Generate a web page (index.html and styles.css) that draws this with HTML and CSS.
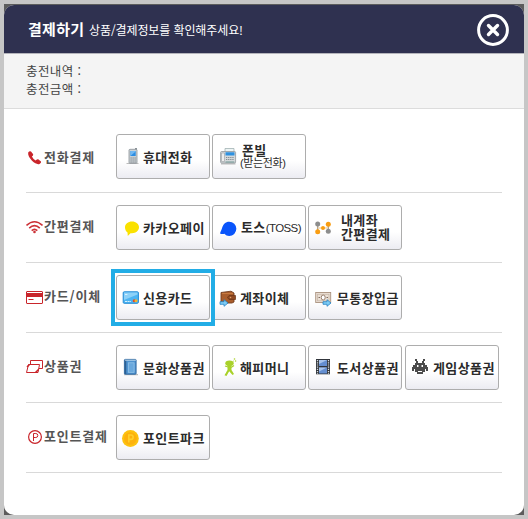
FILE: index.html
```
<!DOCTYPE html>
<html lang="ko">
<head>
    <meta charset="UTF-8">
    <meta name="viewport" content="width=device-width, initial-scale=1.0">
    <title>결제하기</title>
    <link rel="stylesheet" href="styles.css">
</head>
<body>
    <div class="popup">
        <div class="header">
            <h1>결제하기</h1>
            <span class="guide">상품/결제정보를 확인해주세요!</span>
            <button class="close" aria-label="닫기">
                <svg width="32" height="32" viewBox="0 0 32 32" fill="none" stroke="#fff">
                    <circle cx="16" cy="16" r="14.4" stroke-width="3"/>
                    <path d="M11.5 11.5l9 9M20.5 11.5l-9 9" stroke-width="3.4" stroke-linecap="round"/>
                </svg>
            </button>
        </div>

        <div class="info">
            <p>충전내역 :</p>
            <p>충전금액 :</p>
        </div>

        <div class="methods">
            <!-- 전화결제 -->
            <div class="row first">
                <div class="label">
                    <svg width="17" height="45" viewBox="0 0 17 45">
                        <path d="M2.2 18.5Q3.5 16.5 5 17.5L7.2 20.2Q7.5 21.5 5.9 22.6Q7 25 9.6 26.5Q11.2 24.9 12.2 25.2L15 27.5Q15.6 29 13.5 29.9Q10.5 31 6 26.8Q1.5 22 2.2 18.5Z" fill="#c9252b"/>
                    </svg>
                    <span class="wide">전화결제</span>
                </div>
                <button class="pay">
                    <svg width="26" height="43" viewBox="0 0 26 43">
                        <path d="M9.5 28.5h12" stroke="#bbb" stroke-width="1.2"/>
                        <path d="M18 13h2v3h-2z" fill="#8c9499"/>
                        <rect x="12" y="14.3" width="8" height="14" rx="1" fill="#cbd1d4" stroke="#8a9297" stroke-width=".8"/>
                        <rect x="13.4" y="16" width="5.3" height="5" fill="#2b8de3"/>
                        <path d="M13.4 21l5.3-4.5V16h-5.3z" fill="#70b8f3"/>
                        <path d="M13.5 23h5.2M13.5 25h5.2M13.5 27h5.2" stroke="#747e84" stroke-dasharray="1.2 .8"/>
                    </svg>
                    <span>휴대전화</span>
                </button>
                <button class="pay in3 phonebill">
                    <svg width="26" height="43" viewBox="0 0 26 43">
                        <path d="M8 28.8h14.5" stroke="#bbb" stroke-width="1.2"/>
                        <path d="M12 13.5h9v5h-9z" fill="#edf4f4" stroke="#a2b3b4" stroke-width=".8"/>
                        <rect x="7.6" y="16.5" width="15" height="11.5" rx="1" fill="#d5d9db" stroke="#92989c" stroke-width=".8"/>
                        <path d="M8.5 18h3v8.5h-3z" fill="#eee" stroke="#9a9fa2" stroke-width=".6"/>
                        <path d="M12.5 17.2h9v3.3h-9z" fill="#2f91df"/>
                        <path d="M13 22.5h8M13 24.5h8" stroke="#858d92" stroke-dasharray="1.3 .8"/>
                        <path d="M12.5 27h8.8" stroke="#6f9793"/>
                    </svg>
                    <span>폰빌<small>(받는전화)</small></span>
                </button>
            </div>

            <!-- 간편결제 -->
            <div class="row">
                <div class="label">
                    <svg width="17" height="45" viewBox="0 0 17 45" fill="none" stroke="#cc3338" stroke-width="1.6">
                        <path d="M.5 20.5Q8.5 13 16.5 20.5M3.2 23.2Q8.5 18.2 13.8 23.2M5.7 25.7Q8.5 23 11.3 25.7"/>
                        <circle cx="8.5" cy="27" r="1.3" fill="#cc3338" stroke="none"/>
                    </svg>
                    <span>간편결제</span>
                </div>
                <button class="pay low">
                    <svg width="26" height="43" viewBox="0 0 26 43">
                        <path d="M15 15.5c4 0 7 2.5 7 5.8s-3 5.9-7 5.9h-1.5L10.8 30l-.3-3.6C8.8 25.3 8 23.5 8 21.3 8 18 11 15.5 15 15.5z" fill="#fae100"/>
                    </svg>
                    <span>카카오페이</span>
                </button>
                <button class="pay in2 low">
                    <svg width="26" height="43" viewBox="0 0 26 43">
                        <path d="M7 27.5c.5-2.2 1.5-3.2 2-5.2.9-4 3.6-6.6 7.2-6.6a7.1 7.1 0 0 1 0 14.3c-2 0-3.4-.8-4.7-2.2-1.5.4-3 .3-4.5-.3z" fill="#0a55fb"/>
                    </svg>
                    <span>토스<small>(TOSS)</small></span>
                </button>
                <button class="pay in6 account">
                    <svg width="26" height="43" viewBox="0 0 26 43">
                        <path d="M8.7 18v8M19.3 18v8" stroke="#b5a58c" stroke-width="1.5"/>
                        <path d="M10 22h8" stroke="#f8c271" stroke-width="1.2"/>
                        <circle cx="8.7" cy="18" r="2.5" fill="#8d8d8d"/>
                        <circle cx="8.7" cy="25.7" r="2.5" fill="#f99d12"/>
                        <circle cx="14" cy="22" r="2" fill="#f99d12"/>
                        <circle cx="19.3" cy="18.2" r="2.5" fill="#f99d12"/>
                        <circle cx="19.3" cy="25.3" r="2.5" fill="#8d8d8d"/>
                    </svg>
                    <span>내계좌<br>간편결제</span>
                </button>
            </div>

            <!-- 카드/이체 -->
            <div class="row">
                <div class="label">
                    <svg width="17" height="45" viewBox="0 0 17 45">
                        <rect x=".5" y="16.5" width="16" height="12" rx=".5" fill="#fff" stroke="#c9252b"/>
                        <path d="M0 18h17v4H0z" fill="#c9252b"/>
                        <path d="M2.5 24.5h5" stroke="#c9252b"/>
                    </svg>
                    <span>카드/이체</span>
                </div>
                <button class="pay selected">
                    <svg width="26" height="43" viewBox="0 0 26 43">
                        <rect x="6.2" y="15.8" width="15.2" height="11.5" rx="1" fill="#4db4f2" stroke="#268bd5"/>
                        <path d="M7 16.5h13.5v2L7 24z" fill="#8dd1f8"/>
                        <path d="M8 18.5h3M8 25.5h6" stroke="#d9f0fd" stroke-dasharray="2 .6"/>
                        <circle cx="17.2" cy="24.8" r="1.5" fill="#dd4b2f"/>
                        <circle cx="19" cy="24.8" r="1.5" fill="#f2b42c"/>
                    </svg>
                    <span>신용카드</span>
                </button>
                <button class="pay in1">
                    <svg width="26" height="43" viewBox="0 0 26 43">
                        <path d="M8 16.5l10-1.3 3 1.8v9l-2 1H8z" fill="#a95d2c" stroke="#743d1e" stroke-width=".9"/>
                        <path d="M9 17.5h11" stroke="#c8793e"/>
                        <path d="M16 19.5h6.5v4H16l-1.5-2z" fill="#8e4821" stroke="#693416" stroke-width=".7"/>
                        <circle cx="17.5" cy="21.5" r=".8" fill="#e0a16b"/>
                        <path d="M7 25.7h4v-2l4 3.3-4 3.3v-2H7z" fill="#7dccf5" stroke="#2582c4" stroke-width=".8"/>
                    </svg>
                    <span>계좌이체</span>
                </button>
                <button class="pay in2">
                    <svg width="26" height="43" viewBox="0 0 26 43">
                        <rect x="6.7" y="16.5" width="15" height="10" fill="#eadfd5" stroke="#a9917e" stroke-width=".9"/>
                        <rect x="8.5" y="18.3" width="11.5" height="6.5" fill="none" stroke="#c9b8a9" stroke-width=".8"/>
                        <ellipse cx="14.2" cy="21.5" rx="2" ry="2.5" fill="#fff" stroke="#988170"/>
                        <path d="M9.5 21.5H11M17.5 21.5H19" stroke="#806c5e"/>
                        <path d="M14 25.7h4v-2l4 3.3-4 3.3v-2h-4z" fill="#7dccf5" stroke="#2582c4" stroke-width=".8"/>
                    </svg>
                    <span>무통장입금</span>
                </button>
            </div>

            <!-- 상품권 -->
            <div class="row">
                <div class="label">
                    <svg width="17" height="45" viewBox="0 0 17 45" fill="#fff" stroke="#c9252b">
                        <path d="M4.5 15.5h12v8h-12z"/>
                        <path d="M2.5 19.5h11l-1.5 8H.5z"/>
                        <path d="M1 22l2.5-2.5M9.500 27.500l3-3" stroke-width="1.5"/>
                    </svg>
                    <span>상품권</span>
                </div>
                <button class="pay">
                    <svg width="26" height="43" viewBox="0 0 26 43">
                        <path d="M7 28.7h14" stroke="#bbb" stroke-width="1.2"/>
                        <rect x="7.4" y="13.4" width="11.7" height="14.8" rx=".8" fill="#4d92cf" stroke="#2d659d" stroke-width=".9"/>
                        <path d="M8.5 14v14" stroke="#2e6092" stroke-width="1.5"/>
                        <path d="M8 14.2h10.8" stroke="#dceaf5" stroke-width=".8"/>
                        <rect x="11.3" y="16.8" width="5.8" height="9.5" fill="#69a8dd" stroke="#9cc9eb" stroke-width=".7"/>
                    </svg>
                    <span>문화상품권</span>
                </button>
                <button class="pay in1">
                    <svg width="26" height="43" viewBox="0 0 26 43" fill="#a9d12a">
                        <ellipse cx="16.5" cy="17.3" rx="4.2" ry="2.8"/>
                        <path d="M14.5 19.5h4V24l2.5 4-1.500 1-3.300-3.800L13.500 30l-2-.8 3-5.200z"/>
                        <path d="M15 21l-3-1M18 21.500l3-2" stroke="#a9d12a" stroke-width="1.3"/>
                        <circle cx="21.5" cy="13" r=".8"/>
                        <circle cx="22.6" cy="15" r=".7"/>
                        <circle cx="20.7" cy="15" r=".5"/>
                    </svg>
                    <span>해피머니</span>
                </button>
                <button class="pay in2">
                    <svg width="26" height="43" viewBox="0 0 26 43">
                        <path d="M7 13h14v15.300H7z" fill="#31353b"/>
                        <path d="M8.500 14v14M19.500 14v14" stroke="#dadde0" stroke-width="1.3" stroke-dasharray="1.2 1"/>
                        <path d="M10 14h8v6h-8zM10 21.500h8v6h-8z" fill="#648ed0"/>
                        <path d="M10 18l8-4h-8zM10 25.500l8-4h-8z" fill="#a9c5ec"/>
                    </svg>
                    <span>도서상품권</span>
                </button>
                <button class="pay in1 game">
                    <svg width="26" height="43" viewBox="0 0 26 43" fill="#4b4b4b">
                        <path d="M9 13h2v2h1v2h4v-2h1v-2h2v2h-1v2h1v2h2v2h1v4h-2v-2h-1v3h-2v2h-3v-2h2v-1h-4v1h2v2h-3v-2H9v-3H8v2H6v-4h1v-2h2v-2h1v-2H9zM11 19v2h1.500v-2zM15.500 19v2H17v-2z" fill-rule="evenodd"/>
                    </svg>
                    <span>게임상품권</span>
                </button>
            </div>

            <!-- 포인트결제 -->
            <div class="row">
                <div class="label">
                    <svg width="17" height="45" viewBox="0 0 17 45" fill="none" stroke="#c9252b">
                        <circle cx="9" cy="22" r="6.400" stroke-width="1.2"/>
                        <path d="M7.500 26v-7.500h2.300q2 0 2 2t-2 2H7.500"/>
                    </svg>
                    <span>포인트결제</span>
                </div>
                <button class="pay">
                    <svg width="26" height="43" viewBox="0 0 26 43">
                        <circle cx="13.4" cy="22.5" r="8.4" fill="#fdc20f"/>
                        <circle cx="13.4" cy="22.5" r="6.3" fill="#fdb10c"/>
                        <path d="M11.8 26.500v-7.500h2.300q2 0 2 2.200t-2 2.200h-2.300" fill="none" stroke="#ffd02a" stroke-width="1.6"/>
                    </svg>
                    <span>포인트파크</span>
                </button>
            </div>
        </div>
    </div>
</body>
</html>
```
FILE: styles.css
```
* {
    box-sizing: border-box;
}
body {
    margin: 0;
    height: 519px;
    padding-top: 1px;
    border: 4px solid #c6c6c6;
    background-color: #5c5c5c;
    font-family: "Noto Sans CJK KR", "Liberation Sans", sans-serif;
    overflow: hidden;
}
.popup {
    height: 510px;
    border-radius: 10px;
    background-color: #fff;
    overflow: hidden;
}
.header {
    display: flex;
    align-items: center;
    height: 49px;
    padding: 0 15px 0 24px;
    background-color: #2f3150;
    border-bottom: 1px solid #b4b4bb;
    color: #fff;
}
h1 {
    width: 61px;
    margin: 0;
    font-size: 15px;
    font-weight: 700;
    line-height: 20px;
    letter-spacing: 0.3px;
    white-space: nowrap;
}
.guide {
    padding-top: 1px;
    font-size: 12px;
    line-height: 18px;
    letter-spacing: -0.1px;
}
.close {
    width: 32px;
    height: 32px;
    margin-left: auto;
    margin-top: 2px;
    padding: 0;
    border: none;
    background: transparent;
    cursor: pointer;
}
.close svg {
    display: block;
}
.info {
    height: 55px;
    padding: 8px 22px;
    background-color: #f4f4f4;
    border-bottom: 1px solid #dcdcdc;
    color: #444;
}
.info p {
    margin: 0;
    font-size: 12.5px;
    line-height: 18px;
    letter-spacing: 0.4px;
}
.methods {
    padding: 14px 22px 0;
}
.row {
    display: flex;
    gap: 2px;
    height: 70px;
    padding-top: 12px;
    border-bottom: 1px solid #d9d9d9;
}
.row.first {
    padding-top: 11px;
}
.label {
    display: flex;
    align-items: center;
    width: 88px;
    height: 45px;
    color: #555;
    font-size: 13px;
    font-weight: 700;
    letter-spacing: 0.8px;
    white-space: nowrap;
}
.label span {
    margin: -4px 0 0 1px;
}
.label .wide {
    margin-top: -1px;
}
.pay {
    display: flex;
    align-items: center;
    position: relative;
    width: 94px;
    height: 45px;
    padding: 0;
    border: 1px solid #adadad;
    border-radius: 3px;
    background: linear-gradient(#fff 60%, #ececf2);
    color: #2b2b2b;
    font-family: inherit;
    font-size: 13px;
    font-weight: 700;
    line-height: 15px;
    letter-spacing: 0.4px;
    text-align: left;
    white-space: nowrap;
    cursor: pointer;
}
.pay svg {
    flex: none;
}
.pay span {
    margin-top: -1px;
}
.pay.low span {
    margin-top: 0;
}
.pay.in1 span {
    margin-left: 1px;
}
.pay.in2 span {
    margin-left: 2px;
}
.pay.in3 span {
    margin-left: 3px;
}
.pay.in6 span {
    margin-left: 6px;
}
.pay small {
    font-family: "Liberation Sans", "Noto Sans CJK KR", sans-serif;
    font-size: 11.5px;
    font-weight: 400;
    letter-spacing: -0.6px;
}
.phonebill span {
    line-height: 14px;
}
.phonebill small {
    display: block;
    margin-left: -2px;
    font-size: 11px;
    line-height: 13px;
    letter-spacing: -0.4px;
}
.account span {
    line-height: 14px;
}
.game {
    margin-left: 1px;
}
.selected::after {
    content: "";
    position: absolute;
    z-index: 1;
    inset: -7px -6px;
    border: 4px solid #22ade6;
}
```
